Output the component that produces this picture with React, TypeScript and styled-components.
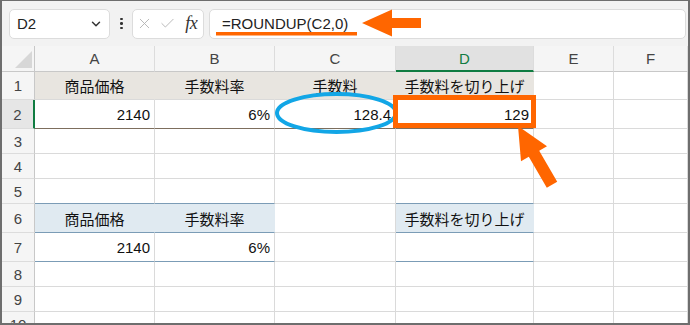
import React, { FC } from "react";
import styled, { createGlobalStyle, css } from "styled-components";
import { ChevronDown, X, Check } from "lucide-react";

const GlobalStyle = createGlobalStyle`
  body {
    margin: 0;
    background: #fff;
    font-family: "Liberation Sans", "Noto Sans CJK JP", sans-serif;
  }
`;

const Frame = styled.div`
  position: relative;
  width: 690px;
  height: 325px;
  box-sizing: border-box;
  border: 2px solid #6e6e6e;
  border-top-width: 1px;
  overflow: hidden;
  background: #fff;
`;

const Toolbar = styled.div`
  height: 45px;
  display: flex;
  align-items: center;
  padding: 0 2px 0 7px;
  background: #f2f2f2;
`;

const NameBox = styled.div`
  width: 101px;
  height: 30px;
  box-sizing: border-box;
  background: #fff;
  border: 1px solid #dcdcdc;
  border-radius: 5px;
  display: flex;
  align-items: center;
  justify-content: space-between;
  padding: 0 6px 0 7px;
  font-size: 15px;
  color: #222;
`;

const Dots = styled.div`
  width: 3px;
  margin: 0 9px 0 10px;
  display: flex;
  flex-direction: column;
  gap: 2px;

  span {
    width: 2.5px;
    height: 2.5px;
    border-radius: 50%;
    background: #333;
  }
`;

const FxBox = styled.div`
  width: 72px;
  height: 30px;
  box-sizing: border-box;
  background: #fff;
  border: 1px solid #dcdcdc;
  border-radius: 5px;
  display: grid;
  grid-template-columns: repeat(3, 1fr);
  align-items: center;
  justify-items: center;
  color: #b4b4b4;
`;

const FxLabel = styled.span`
  font-family: "Liberation Serif", "DejaVu Serif", serif;
  font-style: italic;
  font-size: 18px;
  color: #333;
  letter-spacing: -0.5px;
`;

const FormulaInput = styled.div`
  flex: 1;
  margin-left: 5px;
  height: 30px;
  box-sizing: border-box;
  background: #fff;
  border: 1px solid #dcdcdc;
  border-radius: 5px;
  display: flex;
  align-items: center;
  padding-left: 12px;
  font-size: 15px;
  color: #222;
`;

const Sheet = styled.div`
  display: grid;
  grid-template-columns: 33px 120px 120px 121px 138px 80px 1fr;
  grid-template-rows: 26px 28px 29px 25px 25px 25px 29px 29px 25px 25px 25px;
`;

const Corner = styled.div`
  background: #f5f5f5;
  border-right: 1px solid #c8c8c8;
  border-bottom: 1px solid #c8c8c8;
  display: flex;
  justify-content: flex-end;
  align-items: flex-end;
  padding: 0 2px 3px 0;

  &::after {
    content: "";
    width: 17px;
    height: 17px;
    background: #d7d7d7;
    clip-path: polygon(100% 0, 100% 100%, 0 100%);
  }
`;

const ColHead = styled.div<{ $active?: boolean }>`
  background: #f5f5f5;
  border-right: 1px solid #dcdcdc;
  border-bottom: 1px solid #c8c8c8;
  display: flex;
  align-items: center;
  justify-content: center;
  font-size: 15px;
  color: #444;
  ${(p) =>
    p.$active &&
    css`
      background: #e1e1e1;
      color: #107c41;
      border-bottom: 2px solid #107c41;
    `}
`;

const RowHead = styled.div<{ $active?: boolean }>`
  background: #f5f5f5;
  border-right: 1px solid #c8c8c8;
  border-bottom: 1px solid #dcdcdc;
  display: flex;
  align-items: center;
  justify-content: center;
  font-size: 15px;
  color: #444;
  ${(p) =>
    p.$active &&
    css`
      background: #e6e6e6;
      border-right: 2px solid #107c41;
    `}
`;

type Fill = "beige" | "blue" | undefined;
type Line = "brown" | "blue" | undefined;

const fills = { beige: "#e8e5e0", blue: "#e0eaf1" };
const lines = { brown: "#7d6e5d", blue: "#7b9cb6" };

const Cell = styled.div<{ $align?: string; $fill?: Fill; $line?: Line }>`
  border-right: 1px solid ${(p) => (p.$fill ? fills[p.$fill] : "#dadada")};
  border-bottom: 1px solid ${(p) => (p.$line ? lines[p.$line] : "#dadada")};
  background: ${(p) => (p.$fill ? fills[p.$fill] : "#fff")};
  display: flex;
  align-items: center;
  justify-content: ${(p) => (p.$align === "right" ? "flex-end" : p.$align === "center" ? "center" : "flex-start")};
  padding: 0 4px;
  font-size: 15px;
  color: #111;
  white-space: nowrap;
  overflow: hidden;
`;

const Overlay = styled.svg`
  position: absolute;
  top: -1px;
  left: -2px;
  pointer-events: none;
`;

type CellData = { text?: string; align?: string; fill?: Fill; line?: Line };

const columns = ["A", "B", "C", "D", "E", "F"];

const rows: CellData[][] = [
  [
    { text: "商品価格", align: "center", fill: "beige", line: undefined },
    { text: "手数料率", align: "center", fill: "beige" },
    { text: "手数料", align: "center", fill: "beige" },
    { text: "手数料を切り上げ", align: "center", fill: "beige" },
    {},
    {},
  ],
  [
    { text: "2140", align: "right", line: "brown" },
    { text: "6%", align: "right", line: "brown" },
    { text: "128.4", align: "right", line: "brown" },
    { text: "129", align: "right", line: "brown" },
    {},
    {},
  ],
  [{}, {}, {}, {}, {}, {}],
  [{}, {}, {}, {}, {}, {}],
  [{ line: "blue" }, { line: "blue" }, {}, { line: "blue" }, {}, {}],
  [
    { text: "商品価格", align: "center", fill: "blue", line: "blue" },
    { text: "手数料率", align: "center", fill: "blue", line: "blue" },
    {},
    { text: "手数料を切り上げ", align: "center", fill: "blue", line: "blue" },
    {},
    {},
  ],
  [
    { text: "2140", align: "right", line: "blue" },
    { text: "6%", align: "right", line: "blue" },
    {},
    { line: "blue" },
    {},
    {},
  ],
  [{}, {}, {}, {}, {}, {}],
  [{}, {}, {}, {}, {}, {}],
  [{}, {}, {}, {}, {}, {}],
];

const Annotations: FC = () => (
  <Overlay width={690} height={325} viewBox="0 0 690 325">
    <rect x={216} y={32} width={141} height={3.5} fill="#ff6600" />
    <polygon points="362,23 392,9.5 392,18 421,18 421,28 392,28 392,36.5" fill="#ff6600" />
    <ellipse cx={336.5} cy={113} rx={59.5} ry={19} fill="none" stroke="#12a6e6" strokeWidth={4} />
    <rect x={395.5} y={97.5} width={138} height={28} fill="none" stroke="#ff6600" strokeWidth={5} />
    <polygon
      points="518,126 547,146.2 539.2,150.7 557.2,181.8 546.8,187.8 528.8,156.7 521,161.2"
      fill="#ff6600"
    />
  </Overlay>
);

const App: FC = () => (
  <>
    <GlobalStyle />
    <Frame>
      <Toolbar>
        <NameBox>
          <span>D2</span>
          <ChevronDown size={14} strokeWidth={2.5} color="#333" />
        </NameBox>
        <Dots>
          <span />
          <span />
          <span />
        </Dots>
        <FxBox>
          <X size={17} strokeWidth={1.3} />
          <Check size={17} strokeWidth={1.3} />
          <FxLabel>fx</FxLabel>
        </FxBox>
        <FormulaInput>=ROUNDUP(C2,0)</FormulaInput>
      </Toolbar>
      <Sheet>
        <Corner />
        {columns.map((c) => (
          <ColHead key={c} $active={c === "D"}>
            {c}
          </ColHead>
        ))}
        {rows.map((row, i) => (
          <React.Fragment key={i}>
            <RowHead $active={i === 1}>{i + 1}</RowHead>
            {row.map((cell, j) => (
              <Cell key={j} $align={cell.align} $fill={cell.fill} $line={cell.line}>
                {cell.text}
              </Cell>
            ))}
          </React.Fragment>
        ))}
      </Sheet>
      <Annotations />
    </Frame>
  </>
);

export default App;
